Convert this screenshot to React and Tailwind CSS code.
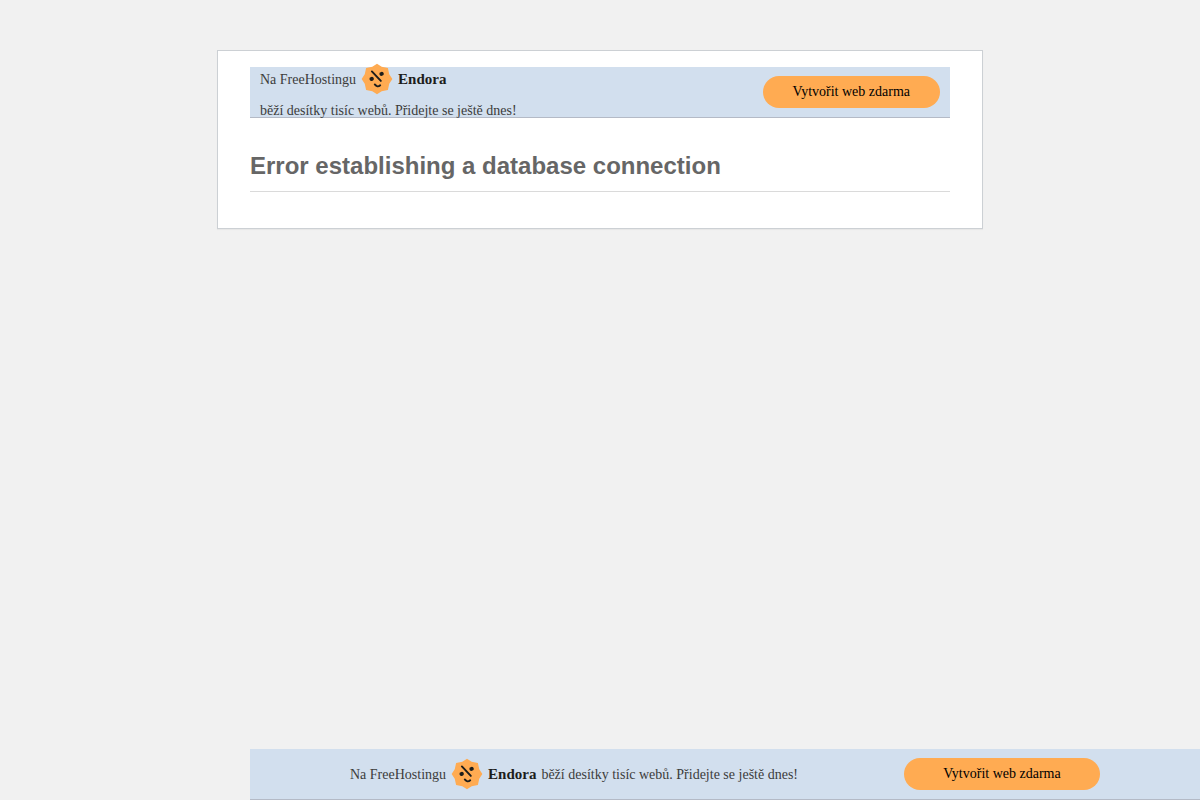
import React from 'react';

function EndoraLogo() {
    return (
        <svg viewBox="0 0 30 30" className="mx-[5px] mb-0.5 size-8 shrink-0" aria-hidden="true">
            <path
                fill="#ffab52"
                d="M15 .6L19.4 3.5L25.2 4.8L26.5 10.6L29.4 15L26.5 19.4L25.2 25.2L19.4 26.5L15 29.4L10.6 26.5L4.8 25.2L3.5 19.4L.6 15L3.5 10.6L4.8 4.8L10.6 3.5Z"
            />
            <ellipse cx="10" cy="14.9" rx="2.1" ry="1.9" fill="#1d1d1b" transform="rotate(-12 10 14.9)" />
            <ellipse cx="19.3" cy="10.2" rx="2.1" ry="1.9" fill="#1d1d1b" transform="rotate(-12 19.3 10.2)" />
            <path d="M10.2 7.9L18.6 16.8" fill="none" stroke="#1d1d1b" strokeWidth="1.8" strokeLinecap="round" />
            <path d="M12.9 20.1Q15.4 23.3 18 20.9" fill="none" stroke="#1d1d1b" strokeWidth="1.8" strokeLinecap="round" />
        </svg>
    );
}

function Brand() {
    return (
        <span className="flex h-8 items-center pt-0.5 whitespace-nowrap">
            Na FreeHostingu
            <EndoraLogo />
            <strong className="text-[15px] text-[#1d1d1b]">Endora</strong>
        </span>
    );
}

const bannerStyle = 'h-[51px] border-b border-[#b4bac6] bg-[#d2dfee] font-["Liberation_Serif",serif] text-sm text-[#3c3c3b]';
const buttonStyle = 'flex h-8 shrink-0 items-center justify-center rounded-full bg-[#ffab52] pb-px text-sm text-black';

export default function App() {
    return (
        <div className="min-h-screen bg-[#f1f1f1] pt-[50px]">
            <main className="mx-auto max-w-[766px] border border-[#ccd0d4] bg-white px-8 pt-4 pb-9 shadow-[0_1px_1px_rgba(0,0,0,0.04)]">
                <aside className={`${bannerStyle} flex items-center justify-between px-2.5`}>
                    <div className="-mt-1 self-start">
                        <Brand />
                        <p className="leading-8">běží desítky tisíc webů. Přidejte se ještě dnes!</p>
                    </div>
                    <a href="#" className={`${buttonStyle} px-[30px]`}>
                        Vytvořit web zdarma
                    </a>
                </aside>

                <h1 className='mt-[31px] border-b border-[#dadada] pb-2 font-["Liberation_Sans",sans-serif] text-2xl leading-[34px] font-bold text-[#666]'>
                    Error establishing a database connection
                </h1>

                {/* starts at the card's content edge and runs out of the window */}
                <aside className={`${bannerStyle} fixed bottom-0 w-full`}>
                    <div className="ml-[100px] flex h-full w-[750px] items-center justify-between">
                        <div className="flex items-center gap-[5px] whitespace-nowrap">
                            <Brand />
                            <span className="pt-0.5">běží desítky tisíc webů. Přidejte se ještě dnes!</span>
                        </div>
                        <a href="#" className={`${buttonStyle} w-[196px]`}>
                            Vytvořit web zdarma
                        </a>
                    </div>
                </aside>
            </main>
        </div>
    );
}
